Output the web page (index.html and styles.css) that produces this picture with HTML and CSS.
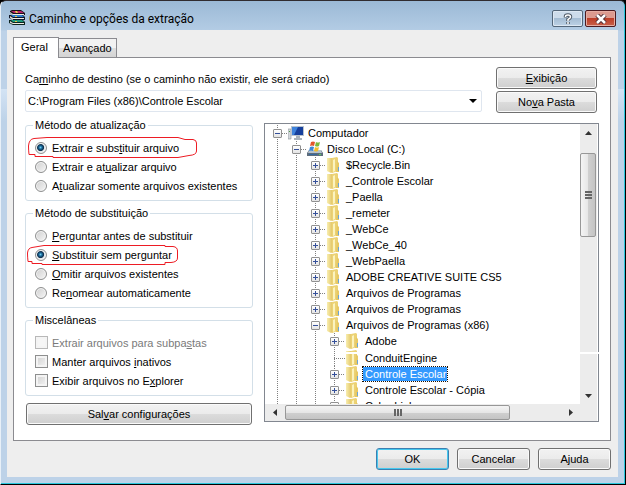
FILE: index.html
```html
<!DOCTYPE html>
<html lang="pt-BR">
<head>
<meta charset="UTF-8">
<meta name="viewport" content="width=device-width, initial-scale=1.0">
<title>Caminho e opções da extração</title>
<link rel="stylesheet" href="styles.css">
</head>
<body>

<svg width="0" height="0" class="defs">
  <defs>
    <linearGradient id="gold" x1="0" x2="1" y1="0" y2="0">
      <stop offset="0" stop-color="#f8eeb0"/>
      <stop offset="1" stop-color="#e0c05c"/>
    </linearGradient>
    <symbol id="folder" viewBox="0 0 16 16">
      <path d="M1 1h5l1 1v13l-2 1-4-2z" fill="url(#gold)"/>
      <path d="M6 1l5-1 1 1v13l-6 2z" fill="#ecd274"/>
      <path d="M7 3l2-1v12l-2 1z" fill="#fbf3bf"/>
      <path d="M11 4l2 2v9h-3z" fill="#e6c864"/>
      <path d="M12 10h1v4h-1z" fill="#6aa5d8"/>
    </symbol>
  </defs>
</svg>

<div class="window">
  <header class="titlebar">
    <svg class="app-icon" width="16" height="16" viewBox="0 0 16 16">
      <path d="M1 1l2-1h9l4 3v2H4L1 3z" fill="#1a1018"/>
      <path d="M2 1h10l3 2H5z" fill="#b8236c"/>
      <path d="M3 4h12v1H4z" fill="#f0ece4"/>
      <path d="M0 5h14l2 2v3H4L0 8z" fill="#10182c"/>
      <path d="M2 5h11l2 2H4z" fill="#2f7fd0"/>
      <path d="M3 8h12v1H4z" fill="#f0ece4"/>
      <path d="M0 10h14l2 2v3H4l-4-2z" fill="#0c2420"/>
      <path d="M2 10h11l2 2H4z" fill="#1f9a80"/>
      <path d="M3 13h12v1H4z" fill="#f0ece4"/>
      <path d="M1 2l3 2v1L1 3zM1 6l3 2v2L1 8zM1 11l3 2v1l-3-1z" fill="#d8d4cc"/>
      <path d="M6 1h2l1 2H7zM6 6h2v1H6zM6 11h2v1H6z" fill="#e8c64a"/>
    </svg>
    <h1 class="title">Caminho e opções da extração</h1>
    <button class="caption-btn" aria-label="Ajuda da janela">
      <svg width="12" height="12" viewBox="0 0 12 12">
        <path d="M3.500 4.500V3.500Q3.500 2 6 2t2.500 2Q8.500 5 6 6.500V8M6 9v2" fill="none" stroke="#4c5866" stroke-width="3.500"/>
        <path d="M3.500 4V3.500Q3.500 2 6 2t2.500 2Q8.500 5 6 6.500V8M6 9v2" fill="none" stroke="#fff" stroke-width="1.500"/>
      </svg>
    </button>
    <button class="caption-btn close" aria-label="Fechar">
      <svg width="12" height="10" viewBox="0 0 12 10">
        <path d="M2 1l8 8M10 1L2 9" stroke="#4b2c34" stroke-width="4.500"/>
        <path d="M2 1l8 8M10 1L2 9" stroke="#fff" stroke-width="2.500"/>
      </svg>
    </button>
  </header>

  <main class="client">
    <nav class="tabs">
      <button class="tab active">Geral</button>
      <button class="tab">Avançado</button>
    </nav>

    <div class="panel">
      <div class="top">
        <div class="destination">
          <label for="path">Ca<u>m</u>inho de destino (se o caminho não existir, ele será criado)</label>
          <div class="combo">
            <select id="path">
              <option>C:\Program Files (x86)\Controle Escolar</option>
            </select>
            <svg class="combo-arrow" width="8" height="4" viewBox="0 0 8 4"><path d="M0 0h8L4 4z"/></svg>
          </div>
        </div>
        <div class="top-buttons">
          <button class="btn"><span><u>E</u>xibição</span></button>
          <button class="btn"><span>No<u>v</u>a Pasta</span></button>
        </div>
      </div>

      <div class="columns">
        <div class="options">
          <fieldset>
            <legend>Método de atualização</legend>
            <label class="option marked"><input type="radio" name="update" checked><span>Extrair e subs<u>t</u>ituir arquivo</span>
              <svg class="mark mark-update" width="170" height="23" viewBox="0 0 170 23"><path d="M19 1.500H150L157 3.500H165Q168.500 4 168.500 7V15Q168.500 19 161 19.500L150 21.500H25V20.500H7V18.500H1Q.500 14 .500 10Q1 3 6 2.500L19 1.500z"/></svg>
            </label>
            <label class="option"><input type="radio" name="update"><span>Extrair e at<u>u</u>alizar arquivo</span></label>
            <label class="option"><input type="radio" name="update"><span>A<u>t</u>ualizar somente arquivos existentes</span></label>
          </fieldset>

          <fieldset>
            <legend>Método de substituição</legend>
            <label class="option"><input type="radio" name="overwrite"><span><u>P</u>erguntar antes de substituir</span></label>
            <label class="option marked"><input type="radio" name="overwrite" checked><span><u>S</u>ubstituir sem perguntar</span>
              <svg class="mark mark-overwrite" width="152" height="21" viewBox="0 0 152 21"><path d="M17 .500H138V1.500H146Q150.500 2 150.500 6V13Q150.500 17 144 17.500H138V19.500H15V18.500H5V16.500H1Q.500 12 .500 8Q1 3 5 2.500L17 .500z"/></svg>
            </label>
            <label class="option"><input type="radio" name="overwrite"><span><u>O</u>mitir arquivos existentes</span></label>
            <label class="option"><input type="radio" name="overwrite"><span>Re<u>n</u>omear automaticamente</span></label>
          </fieldset>

          <fieldset>
            <legend>Miscelâneas</legend>
            <label class="option disabled"><input type="checkbox" disabled><span>Extrair arquivos para subpa<u>s</u>tas</span></label>
            <label class="option"><input type="checkbox"><span>Manter arquivos <u>i</u>nativos</span></label>
            <label class="option"><input type="checkbox"><span>Exibir arquivos no E<u>x</u>plorer</span></label>
          </fieldset>

          <button class="btn save"><span>Sal<u>v</u>ar configurações</span></button>
        </div>

        <div class="tree-box">
          <div class="tree">
            <ul>
              <li>
                <div class="node"><i class="toggle minus"></i><i class="dots"></i>
                  <svg width="16" height="16" viewBox="0 0 16 16">
                    <path d="M0 4h3v10H0z" fill="#d5d9dd" stroke="#8b9198" stroke-width=".6"/>
                    <path d="M3 1h13v10H3z" fill="#b9c3ce"/>
                    <path d="M4 2h11v8H4z" fill="#163f9c"/>
                    <path d="M4 2h6L6 10H4z" fill="#3f83dc"/>
                    <path d="M8 11h4v2H8zM6 13h8v2H6z" fill="#aab3bc"/>
                    <path d="M1 6h1v1H1z" fill="#4d9b45"/>
                  </svg>
                  <span>Computador</span></div>
                <ul>
                  <li>
                    <div class="node"><i class="toggle minus"></i><i class="dots"></i>
                      <svg width="16" height="16" viewBox="0 0 16 16">
                        <path d="M2 9h12l2 3v3H0v-3z" fill="#5e6d7d"/>
                        <path d="M2 9h12l1 3H1z" fill="#b6c3cf"/>
                        <path d="M2 13h8v1H2z" fill="#35699f"/>
                        <path d="M12 13h2v1h-2z" fill="#58d45c"/>
                        <path d="M4 1q2-1 4 0L7 5Q5 4 3 5z" fill="#e2572b"/>
                        <path d="M9 1q2 1 4 0l-1 4q-2 1-4 0z" fill="#7ab93a"/>
                        <path d="M3 6q2-1 4 0l-1 4q-2-1-4 0z" fill="#3c86d6"/>
                        <path d="M8 6q2 1 4 0l-1 4q-2 1-4 0z" fill="#f2bd2c"/>
                      </svg>
                      <span>Disco Local (C:)</span></div>
                    <ul>
                      <li><div class="node"><i class="toggle"></i><i class="dots"></i><svg width="16" height="16"><use href="#folder"/></svg><span>$Recycle.Bin</span></div></li>
                      <li><div class="node"><i class="toggle"></i><i class="dots"></i><svg width="16" height="16"><use href="#folder"/></svg><span>_Controle Escolar</span></div></li>
                      <li><div class="node"><i class="toggle"></i><i class="dots"></i><svg width="16" height="16"><use href="#folder"/></svg><span>_Paella</span></div></li>
                      <li><div class="node"><i class="toggle"></i><i class="dots"></i><svg width="16" height="16"><use href="#folder"/></svg><span>_remeter</span></div></li>
                      <li><div class="node"><i class="toggle"></i><i class="dots"></i><svg width="16" height="16"><use href="#folder"/></svg><span>_WebCe</span></div></li>
                      <li><div class="node"><i class="toggle"></i><i class="dots"></i><svg width="16" height="16"><use href="#folder"/></svg><span>_WebCe_40</span></div></li>
                      <li><div class="node"><i class="toggle"></i><i class="dots"></i><svg width="16" height="16"><use href="#folder"/></svg><span>_WebPaella</span></div></li>
                      <li><div class="node"><i class="toggle"></i><i class="dots"></i><svg width="16" height="16"><use href="#folder"/></svg><span>ADOBE CREATIVE SUITE CS5</span></div></li>
                      <li><div class="node"><i class="toggle"></i><i class="dots"></i><svg width="16" height="16"><use href="#folder"/></svg><span>Arquivos de Programas</span></div></li>
                      <li><div class="node"><i class="toggle"></i><i class="dots"></i><svg width="16" height="16"><use href="#folder"/></svg><span>Arquivos de Programas</span></div></li>
                      <li>
                        <div class="node"><i class="toggle minus"></i><i class="dots"></i><svg width="16" height="16"><use href="#folder"/></svg><span>Arquivos de Programas (x86)</span></div>
                        <ul>
                          <li><div class="node"><i class="toggle"></i><i class="dots"></i><svg width="16" height="16"><use href="#folder"/></svg><span>Adobe</span></div></li>
                          <li><div class="node leaf"><i class="dots"></i><svg width="16" height="16"><use href="#folder"/></svg><span>ConduitEngine</span></div></li>
                          <li><div class="node selected"><i class="toggle"></i><i class="dots"></i><svg width="16" height="16"><use href="#folder"/></svg><span>Controle Escolar</span></div></li>
                          <li><div class="node"><i class="toggle"></i><i class="dots"></i><svg width="16" height="16"><use href="#folder"/></svg><span>Controle Escolar - Cópia</span></div></li>
                          <li><div class="node"><i class="toggle"></i><i class="dots"></i><svg width="16" height="16"><use href="#folder"/></svg><span>CyberLink</span></div></li>
                        </ul>
                      </li>
                    </ul>
                  </li>
                </ul>
              </li>
            </ul>
          </div>
          <div class="scroll-v">
            <button class="arrow" aria-label="Para cima"><svg width="7" height="4" viewBox="0 0 7 4"><path d="M0 4h7L3.500 0z"/></svg></button>
            <div class="thumb"><i></i><i></i><i></i></div>
            <button class="arrow" aria-label="Para baixo"><svg width="7" height="4" viewBox="0 0 7 4"><path d="M0 0h7L3.500 4z"/></svg></button>
          </div>
          <div class="scroll-h">
            <button class="arrow" aria-label="Para a esquerda"><svg width="4" height="7" viewBox="0 0 4 7"><path d="M4 0v7L0 3.500z"/></svg></button>
            <div class="thumb"><i></i><i></i><i></i></div>
            <button class="arrow" aria-label="Para a direita"><svg width="4" height="7" viewBox="0 0 4 7"><path d="M0 0v7l4-3.500z"/></svg></button>
          </div>
        </div>
      </div>
    </div>

    <footer class="actions">
      <button class="btn default"><span>OK</span></button>
      <button class="btn"><span>Cancelar</span></button>
      <button class="btn"><span>Ajuda</span></button>
    </footer>
  </main>
</div>

</body>
</html>
```
FILE: styles.css
```css
* {
  box-sizing: border-box;
}

body {
  margin: 0;
  background: #000;
  color: #000;
  font: 11px/14px "Liberation Sans", Arial, sans-serif;
}

button, select, input {
  font: inherit;
  color: inherit;
  margin: 0;
}

u {
  text-underline-offset: 1px;
}

.defs {
  position: absolute;
}

/* window frame */
.window {
  display: flex;
  flex-direction: column;
  min-height: 100vh;
  padding: 0 7px 7px 6px;
  border: 1px solid #000;
  border-left-color: #e8f0f8;
  border-top-color: #302c30;
  border-radius: 6px 6px 0 0;
  background: linear-gradient(#9bb9d6, #b3cce4 29px, #bdd2e8 30px, #bdd2e8 88px, #d3e3f4 88px, #bdd2e8 120px);
  box-shadow: inset -1px -1px #2bc7dc;
}

.titlebar {
  display: flex;
  align-items: flex-start;
  height: 29px;
  padding: 9px 0 0 2px;
}

.title {
  flex: 1;
  margin: 0 0 0 4px;
  font: 12px/18px Roboto, "Open Sans", sans-serif;
}

.caption-btn {
  display: flex;
  align-items: center;
  justify-content: center;
  width: 31px;
  height: 17px;
  margin-right: 2px;
  padding: 0;
  border: 1px solid #536679;
  border-radius: 2px;
  background: linear-gradient(#cddceb 50%, #a5bdd4 50%, #bdd2e6);
  box-shadow: inset 0 0 0 1px #dde8f3;
}

.caption-btn.close {
  border-color: #4b1a20;
  background: linear-gradient(#dc9a8f 45%, #bc3b25 45%, #c8614b);
  box-shadow: inset 0 0 0 1px #e5aca2;
}

.client {
  flex: 1;
  padding: 7px 7px 7px 6px;
  background: #eee;
}

/* tabs */
.tabs {
  display: flex;
  align-items: flex-end;
}

.tab {
  height: 19px;
  padding: 0 4px;
  border: 1px solid #8b8b90;
  border-left: 0;
  border-bottom: 0;
  background: linear-gradient(#f2f2f2 50%, #dedede 50%, #d4d4d4);
}

.tab.active {
  position: relative;
  height: 21px;
  margin-bottom: -1px;
  padding: 0 10px 2px 7px;
  border-left: 1px solid #8b8b90;
  background: #fff;
}

.panel {
  padding: 9px 11px 15px;
  border: 1px solid #8b8b90;
  background: #fff;
}

.top {
  display: flex;
  gap: 14px;
  margin-right: 2px;
}

.destination {
  flex: 1;
  padding-top: 5px;
}

.destination label {
  display: block;
}

.combo {
  position: relative;
  margin-top: 4px;
}

.combo select {
  display: block;
  width: 100%;
  height: 22px;
  padding: 0 2px;
  appearance: none;
  border: 1px solid #dfe6ef;
  border-radius: 2px;
  background: #fff;
}

.combo-arrow {
  position: absolute;
  top: 9px;
  right: 5px;
  pointer-events: none;
}

.top-buttons {
  display: flex;
  flex-direction: column;
  gap: 2px;
  width: 101px;
}

.btn {
  height: 22px;
  padding: 0;
  border: 1px solid #707070;
  border-radius: 3px;
  background: linear-gradient(#f2f2f2, #ebebeb 50%, #dcdcdc 50%, #cfcfcf);
  box-shadow: inset 0 0 0 1px #fafafa;
}

/* option groups */
.columns {
  display: flex;
  align-items: flex-start;
  gap: 11px;
  margin-top: 5px;
}

.options {
  display: flex;
  flex-direction: column;
  gap: 5px;
  width: 228px;
}

fieldset {
  margin: 0;
  padding: 6px 9px 5px;
  border: 1px solid #d3dfe8;
  border-radius: 3px;
}

legend {
  margin-left: -2px;
  padding: 0 2px;
}

.option {
  display: flex;
  align-items: center;
  gap: 4px;
  height: 19px;
}

.option input {
  appearance: none;
  width: 13px;
  height: 13px;
  border: 1px solid #8e8f8f;
  background: linear-gradient(135deg, #cfcfcf, #f6f6f6);
  box-shadow: inset 0 0 0 2px #f4f4f4;
}

.option input[type="radio"] {
  width: 12px;
  height: 12px;
  margin-right: 1px;
  border-radius: 50%;
  box-shadow: inset 0 0 0 1px #f4f4f4;
}

.option input[type="radio"]:checked {
  background: radial-gradient(circle at 45% 45%, #6fd0f0 0, #1c6a9c 20%, #0d2f4c 40%, #e4e8ec 52%);
}

.option input:disabled {
  border-color: #b8b8b8;
  background: #f6f6f6;
}

.option.disabled {
  color: #7a7a7a;
}

.option.marked {
  position: relative;
}

/* red outline around the recommended options */
.mark {
  position: absolute;
  left: -7px;
  top: -2px;
  fill: none;
  stroke: #ed1c24;
  pointer-events: none;
}

.mark-overwrite {
  left: -8px;
  top: 0;
}

.save {
  margin: 2px 1px 0;
}

/* folder tree */
.tree-box {
  position: relative;
  flex: 1;
  display: grid;
  grid-template-columns: 1fr 17px;
  grid-template-rows: 280px 17px;
  min-width: 0;
  margin-top: 5px;
  padding-right: 1px;
  border: 1px solid #828790;
}

/* pale seam across the lower part of the list */
.tree-box::after {
  content: "";
  position: absolute;
  top: 228px;
  left: 80px;
  right: -1px;
  height: 2px;
  background: #fff;
}

.tree {
  overflow: hidden;
  padding: 1px 0 0 7px;
  white-space: nowrap;
}

.tree ul {
  margin: 0;
  padding: 0;
  list-style: none;
}

.tree ul ul {
  margin-left: 19px;
}

.tree li {
  background: repeating-linear-gradient(#808080 0 1px, transparent 1px 2px) 5px 0 / 1px 100% no-repeat;
}

.node {
  display: flex;
  align-items: center;
  height: 16px;
}

.node svg {
  margin-right: 2px;
}

.node span {
  padding: 0 1px 0 2px;
}

.toggle {
  width: 9px;
  height: 9px;
  margin-left: 1px;
  border: 1px solid #919191;
  border-radius: 1px;
  background:
    linear-gradient(#35509a, #35509a) center / 5px 1px no-repeat,
    linear-gradient(#35509a, #35509a) center / 1px 5px no-repeat,
    linear-gradient(#fff, #e4e4e4);
}

.toggle.minus {
  background:
    linear-gradient(#35509a, #35509a) center / 5px 1px no-repeat,
    linear-gradient(#fff, #e4e4e4);
}

.dots {
  width: 6px;
  height: 1px;
  background: repeating-linear-gradient(90deg, #808080 0 1px, transparent 1px 2px);
}

.node.leaf {
  height: 17px;
  padding-top: 1px;
}

.leaf .dots {
  width: 11px;
  margin-left: 5px;
}

.selected span {
  outline: 1px dotted #201000;
  background: #3399ff;
  color: #fff;
}

/* scroll bars */
.scroll-v,
.scroll-h {
  display: flex;
  background: #ececec;
}

.scroll-v {
  flex-direction: column;
}

.scroll-h {
  grid-column: 1 / 3;
  padding: 1px 18px 1px 1px;
}

.arrow {
  display: flex;
  align-items: center;
  justify-content: center;
  flex: none;
  width: 17px;
  height: 17px;
  padding: 0;
  border: 0;
  background: none;
}

.arrow svg {
  fill: #333;
}

.thumb {
  display: flex;
  align-items: center;
  justify-content: center;
  gap: 1px;
  border: 1px solid #979797;
  border-radius: 2px;
}

.thumb i {
  background: #666;
}

.scroll-v .thumb {
  flex-direction: column;
  height: 84px;
  margin: 12px 1px auto 0;
  background: linear-gradient(90deg, #f4f4f4, #e6e6e6 50%, #d0d0d0 50%, #c4c4c4);
}

.scroll-v .thumb i {
  width: 7px;
  height: 2px;
}

.scroll-h .arrow {
  height: 15px;
}

.scroll-h .thumb {
  flex: 0 1 225px;
  margin: 0 auto 0 2px;
  background: linear-gradient(#f4f4f4, #e6e6e6 50%, #d0d0d0 50%, #c4c4c4);
}

.scroll-h .thumb i {
  width: 2px;
  height: 7px;
}

/* bottom buttons */
.actions {
  display: flex;
  justify-content: flex-end;
  gap: 8px;
  margin-top: 7px;
}

.actions .btn {
  width: 73px;
}

.btn.default {
  border-color: #3c7fb1;
  box-shadow: inset 0 0 0 1px #46c8ee;
}
```
